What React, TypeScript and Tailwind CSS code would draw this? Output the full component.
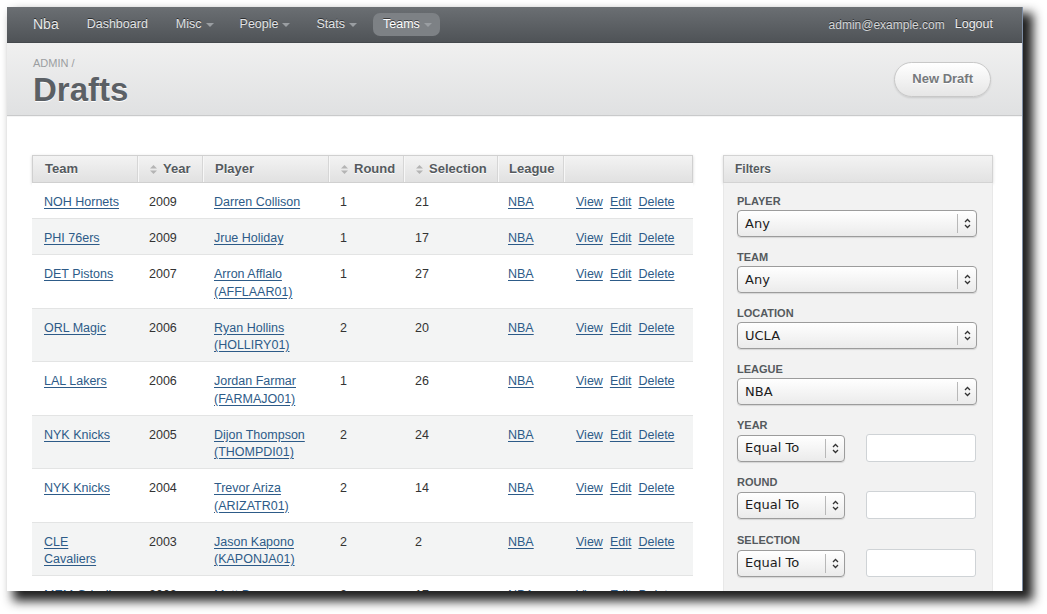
import React from "react";

type Draft = {
  team: string[];
  year: string;
  player: string[];
  round: string;
  sel: string;
};

const drafts: Draft[] = [
  { team: ["NOH Hornets"], year: "2009", player: ["Darren Collison"], round: "1", sel: "21" },
  { team: ["PHI 76ers"], year: "2009", player: ["Jrue Holiday"], round: "1", sel: "17" },
  { team: ["DET Pistons"], year: "2007", player: ["Arron Afflalo", "(AFFLAAR01)"], round: "1", sel: "27" },
  { team: ["ORL Magic"], year: "2006", player: ["Ryan Hollins", "(HOLLIRY01)"], round: "2", sel: "20" },
  { team: ["LAL Lakers"], year: "2006", player: ["Jordan Farmar", "(FARMAJO01)"], round: "1", sel: "26" },
  { team: ["NYK Knicks"], year: "2005", player: ["Dijon Thompson", "(THOMPDI01)"], round: "2", sel: "24" },
  { team: ["NYK Knicks"], year: "2004", player: ["Trevor Ariza", "(ARIZATR01)"], round: "2", sel: "14" },
  { team: ["CLE", "Cavaliers"], year: "2003", player: ["Jason Kapono", "(KAPONJA01)"], round: "2", sel: "2" },
  { team: ["MEM Grizzlies"], year: "2002", player: ["Matt Barnes", "(BARNEMA02)"], round: "2", sel: "17" },
];

const cols = "grid grid-cols-[105px_65px_126px_75px_94px_66px_130px]";

const Caret = () => (
  <span className="ml-[4px] inline-block h-0 w-0 border-x-[4px] border-t-[4px] border-x-transparent border-t-[#9a9ea2] align-middle" />
);

const SortIcon = () => (
  <svg width="7" height="9" viewBox="0 0 7 9" className="mr-[6px] shrink-0">
    <path d="M3.5 0 L7 3.5 H0 Z" fill="#b4b4b4" />
    <path d="M0 5.5 H7 L3.5 9 Z" fill="#b4b4b4" />
  </svg>
);

const SelectArrows = () => (
  <svg width="7" height="11" viewBox="0 0 7 11">
    <path d="M1 4 L3.5 1.5 L6 4" stroke="#333" strokeWidth="1.3" fill="none" />
    <path d="M1 7 L3.5 9.5 L6 7" stroke="#333" strokeWidth="1.3" fill="none" />
  </svg>
);

const FakeSelect = ({ value, wide }: { value: string; wide?: boolean }) => (
  <div
    className={
      "flex h-[27px] items-center rounded-[4px] border border-[#9c9c9c] bg-gradient-to-b from-white to-[#ebebeb] shadow-[0_1px_1px_rgba(0,0,0,0.12)] " +
      (wide ? "w-[240px]" : "w-[108px]")
    }
  >
    <span className="flex-1 pl-[7px] font-['DejaVu_Sans',sans-serif] text-[13px] text-[#1c1c1c]">{value}</span>
    <span className="flex h-[19px] w-[19px] items-center justify-center border-l border-[#b8b8b8]">
      <SelectArrows />
    </span>
  </div>
);

const Label = ({ children }: { children: React.ReactNode }) => (
  <div className="mb-[2px] text-[11px] font-bold leading-[13px] text-[#555a5e]">{children}</div>
);

const Link = ({ children }: { children: React.ReactNode }) => (
  <a className="cursor-pointer text-[#2d5b88] underline underline-offset-2">{children}</a>
);

export default function App() {
  return (
    <div className="min-h-screen bg-white pb-[23px] pl-[7px] pt-[7px] font-['Liberation_Sans',Arial,sans-serif]">
      <div className="h-[584px] w-[1016px] overflow-hidden border-r border-[#7f8fa6] bg-white shadow-[8px_8px_10px_2px_rgba(0,0,0,0.88)]">
        {/* navbar */}
        <div className="flex h-[36px] items-center justify-between border-b border-[#45494d] bg-gradient-to-b from-[#6b6f73] to-[#4f5357] pl-[26px] pr-[29px] text-[12.5px] text-[#e2e4e6] [text-shadow:0_-1px_0_rgba(0,0,0,0.55)]">
          <div className="flex items-center">
            <span className="mr-[18px] text-[14px] text-[#e8e8e8]">Nba</span>
            <div className="flex items-center gap-[8px]">
              <span className="px-[10px] py-[4px]">Dashboard</span>
              <span className="flex items-center py-[4px] pl-[10px] pr-[8px]">Misc<Caret /></span>
              <span className="flex items-center py-[4px] pl-[10px] pr-[8px]">People<Caret /></span>
              <span className="flex items-center py-[4px] pl-[10px] pr-[8px]">Stats<Caret /></span>
              <span className="flex h-[23px] items-center rounded-[7px] bg-[#7d8185] pl-[10px] pr-[8px] text-white">Teams<Caret /></span>
            </div>
          </div>
          <div className="flex items-center gap-[10px]">
            <span className="text-[12px] text-[#d4d6d8]">admin@example.com</span>
            <span className="text-[#eeeeee]">Logout</span>
          </div>
        </div>

        {/* page header */}
        <div className="flex h-[73px] items-center justify-between border-b border-[#c9cacb] bg-gradient-to-b from-[#f0f0f0] to-[#e0e1e2] pl-[26px] pr-[31px] shadow-[0_1px_0_#f5f5f5]">
          <div className="pt-[5px]">
            <div className="text-[11px] leading-[13px] text-[#9b9ea1]">ADMIN /</div>
            <h1 className="mt-[3px] text-[33px] font-bold leading-[33px] text-[#5b6065] [text-shadow:0_1px_0_#fff]">Drafts</h1>
          </div>
          <button className="h-[35px] rounded-full border border-[#c8c8c8] bg-gradient-to-b from-white to-[#e6e6e6] px-[17px] text-[13px] font-bold text-[#76797c] shadow-[0_1px_2px_rgba(0,0,0,0.12)] [text-shadow:0_1px_0_#fff]">
            New Draft
          </button>
        </div>

        {/* content */}
        <div className="flex gap-[30px] pl-[25px] pr-[30px] pt-[39px]">
          {/* table */}
          <div className="w-[661px] shrink-0 text-[12.5px] text-[#333]">
            <div className={cols + " h-[28px] border border-[#d0d0d0] bg-gradient-to-b from-[#f3f3f3] to-[#e1e1e1] text-[13px] font-bold text-[#555a5e] shadow-[0_1px_3px_rgba(0,0,0,0.18)] [text-shadow:0_1px_0_#fff]"}>
              <div className="flex items-center border-r border-[#d6d6d6] pl-[12px]">Team</div>
              <div className="flex items-center border-r border-[#d6d6d6] pl-[12px] shadow-[inset_1px_0_0_#f7f7f7]"><SortIcon />Year</div>
              <div className="flex items-center border-r border-[#d6d6d6] pl-[12px] shadow-[inset_1px_0_0_#f7f7f7]">Player</div>
              <div className="flex items-center border-r border-[#d6d6d6] pl-[12px] shadow-[inset_1px_0_0_#f7f7f7]"><SortIcon />Round</div>
              <div className="flex items-center border-r border-[#d6d6d6] pl-[12px] shadow-[inset_1px_0_0_#f7f7f7]"><SortIcon />Selection</div>
              <div className="flex items-center border-r border-[#d6d6d6] pl-[11px] shadow-[inset_1px_0_0_#f7f7f7]">League</div>
              <div className="shadow-[inset_1px_0_0_#f7f7f7]" />
            </div>
            {drafts.map((d, i) => (
              <div
                key={i}
                className={cols + " border-b border-[#e3e4e4] pb-[6.5px] pt-[11px] leading-[17.5px] " + (i % 2 === 1 ? "bg-[#f3f4f4]" : "bg-white")}
              >
                <div className="pl-[12px]">
                  {d.team.map((t, j) => (
                    <div key={j}><Link>{t}</Link></div>
                  ))}
                </div>
                <div className="pl-[12px]">{d.year}</div>
                <div className="pl-[12px]">
                  {d.player.map((p, j) => (
                    <div key={j}><Link>{p}</Link></div>
                  ))}
                </div>
                <div className="pl-[12px]">{d.round}</div>
                <div className="pl-[12px]">{d.sel}</div>
                <div className="pl-[11px]"><Link>NBA</Link></div>
                <div className="flex gap-[7px] pl-[13px]">
                  <Link>View</Link>
                  <Link>Edit</Link>
                  <Link>Delete</Link>
                </div>
              </div>
            ))}
          </div>

          {/* filters */}
          <div className="w-[270px] shrink-0">
            <div className="flex h-[28px] items-center border border-[#d3d3d3] bg-gradient-to-b from-[#f3f3f3] to-[#e2e2e2] pl-[11px] text-[12px] font-bold text-[#555a5e] shadow-[0_1px_3px_rgba(0,0,0,0.15)] [text-shadow:0_1px_0_#fff]">
              Filters
            </div>
            <div className="h-[500px] border-x border-[#e8e8e8] bg-[#f2f2f2] pl-[13px] pt-[12px]">
              <div className="mb-[14px]">
                <Label>PLAYER</Label>
                <FakeSelect value="Any" wide />
              </div>
              <div className="mb-[14px]">
                <Label>TEAM</Label>
                <FakeSelect value="Any" wide />
              </div>
              <div className="mb-[14px]">
                <Label>LOCATION</Label>
                <FakeSelect value="UCLA" wide />
              </div>
              <div className="mb-[14px]">
                <Label>LEAGUE</Label>
                <FakeSelect value="NBA" wide />
              </div>
              {["YEAR", "ROUND", "SELECTION"].map((f, i) => (
                <div key={f} className={i === 0 ? "mb-[14px]" : "mb-[15px]"}>
                  <Label>{f}</Label>
                  <div className="flex items-center gap-[21px]">
                    <FakeSelect value="Equal To" />
                    <input className="h-[28px] w-[110px] rounded-[3px] border border-[#cfd3d6] bg-white" />
                  </div>
                </div>
              ))}
            </div>
          </div>
        </div>
      </div>
    </div>
  );
}
